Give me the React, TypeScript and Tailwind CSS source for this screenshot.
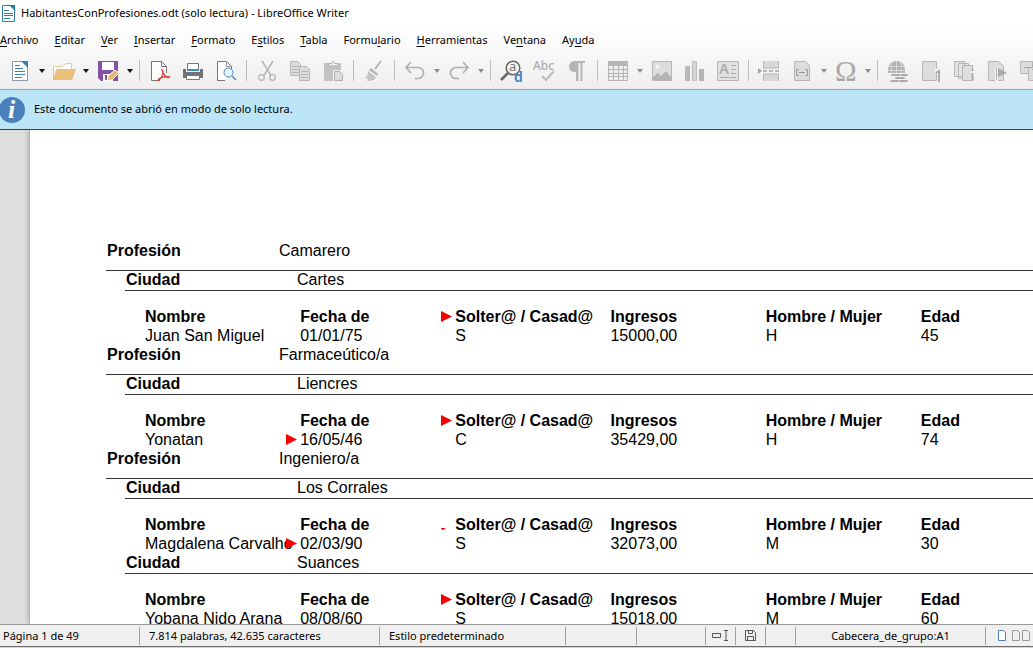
import React from 'react';

type Person = {
  nombre: string;
  fecha: string;
  estado: string;
  ingresos: string;
  sexo: string;
  edad: string;
  headMark?: 'full' | 'cut';
  dateMark?: boolean;
};

type Group = { profesion?: string; ciudad: string; person: Person };

const groups: Group[] = [
  {
    profesion: 'Camarero',
    ciudad: 'Cartes',
    person: { nombre: 'Juan San Miguel', fecha: '01/01/75', estado: 'S', ingresos: '15000,00', sexo: 'H', edad: '45', headMark: 'full' },
  },
  {
    profesion: 'Farmaceútico/a',
    ciudad: 'Liencres',
    person: { nombre: 'Yonatan', fecha: '16/05/46', estado: 'C', ingresos: '35429,00', sexo: 'H', edad: '74', headMark: 'full', dateMark: true },
  },
  {
    profesion: 'Ingeniero/a',
    ciudad: 'Los Corrales',
    person: { nombre: 'Magdalena Carvalho', fecha: '02/03/90', estado: 'S', ingresos: '32073,00', sexo: 'M', edad: '30', headMark: 'cut', dateMark: true },
  },
  {
    ciudad: 'Suances',
    person: { nombre: 'Yobana Nido Arana', fecha: '08/08/60', estado: 'S', ingresos: '15018,00', sexo: 'M', edad: '60', headMark: 'full' },
  },
];

// [before, access key, after]
const menus = [
  ['', 'A', 'rchivo'],
  ['', 'E', 'ditar'],
  ['', 'V', 'er'],
  ['', 'I', 'nsertar'],
  ['', 'F', 'ormato'],
  ['E', 's', 'tilos'],
  ['', 'T', 'abla'],
  ['Formu', 'l', 'ario'],
  ['', 'H', 'erramientas'],
  ['Ve', 'n', 'tana'],
  ['Ay', 'u', 'da'],
];

const Svg: React.FC<{ children: React.ReactNode }> = ({ children }) => (
  <svg width="22" height="22" viewBox="0 0 22 22" fill="none" className="shrink-0 overflow-visible" aria-hidden="true">
    {children}
  </svg>
);

const icons: Record<string, React.ReactNode> = {
  Nuevo: (
    <Svg>
      <path d="M3.500 1.500h10l5 5v14h-15z" fill="#fff" stroke="#8a9aa8" />
      <path d="M12 1h7v7z" fill="#2f7fb8" />
      <path d="M6 5.500h5M6 8.500h8M6 11.500h10M6 14.500h10M6 17.500h7" stroke="#3f7fbf" />
    </Svg>
  ),
  Abrir: (
    <Svg>
      <path d="M.5 19V6.500h9l3-3h6V9" fill="#fff" stroke="#e3c9a0" />
      <path d="M3 9h20l-4 11H0z" fill="#eac07a" />
    </Svg>
  ),
  Guardar: (
    <Svg>
      <path d="M1 1h20v20H4l-3-3z" fill="#8551a6" />
      <path d="M5 2h12v8H5z" fill="#fff" />
      <path d="M6 14h10v7H6z" fill="#fff" />
      <path d="M8 15h2v5H8z" fill="#8551a6" />
      <path d="M10 21l1-5 7-6 4 3-7 7z" fill="#eac07a" stroke="#fff" />
      <path d="M13 17l6-5" stroke="#d9a254" />
    </Svg>
  ),
  'Exportar a PDF': (
    <Svg>
      <path d="M11 20.500H2.500v-19h10l5 5V13" fill="#fff" stroke="#777" />
      <path d="M12.500 1.500v5h5" stroke="#777" />
      <path d="M13 10c2 1 1 7-3.500 10.500-1.500-2 5-4.500 11-3.500-1 2-6-1-7.500-7z" stroke="#d9483b" strokeWidth="1.400" />
    </Svg>
  ),
  Imprimir: (
    <Svg>
      <path d="M5.500 9V3.500h11V9" fill="#fff" stroke="#777" />
      <path d="M1 9h3v3h14V9h3v9H1z" fill="#6f7377" />
      <path d="M5 9h12v2H5z" fill="#3f8ac4" />
      <path d="M4.500 15.500h13v4h-13z" fill="#fff" stroke="#777" />
    </Svg>
  ),
  'Vista previa': (
    <Svg>
      <path d="M10 20.500H2.500v-19h9l5 5V9" fill="#fff" stroke="#777" />
      <path d="M11.500 1.500v5h5" stroke="#999" />
      <circle cx="13.500" cy="12.500" r="4.500" fill="#eaf4fb" stroke="#4f86ba" />
      <path d="M17 16l4 4" stroke="#4f86ba" strokeWidth="1.500" />
    </Svg>
  ),
  Cortar: (
    <Svg>
      <path d="M6 1l9 14.500M17 1L8 15.500" stroke="#b5b5b5" strokeWidth="1.500" />
      <circle cx="5.500" cy="17.500" r="2.800" stroke="#b5b5b5" strokeWidth="1.300" />
      <circle cx="16.500" cy="17.500" r="2.800" stroke="#b5b5b5" strokeWidth="1.300" />
    </Svg>
  ),
  Copiar: (
    <Svg>
      <path d="M1.500 1.500h7l3 3v11h-10z" fill="#ddd" stroke="#b5b5b5" />
      <path d="M3 6.500h7M3 9.500h7M3 12.500h7" stroke="#b5b5b5" />
      <path d="M10.500 6.500h7l3 3v11h-10z" fill="#ddd" stroke="#b5b5b5" />
      <path d="M12 11.500h7M12 14.500h7M12 17.500h7" stroke="#b5b5b5" />
    </Svg>
  ),
  Pegar: (
    <Svg>
      <path d="M2 3h17v18H2z" fill="#c2c2c2" />
      <path d="M6.500 6V3.500h3l1-2h1l1 2h3V6z" fill="#eee" stroke="#b5b5b5" />
      <path d="M11 10h7l4 4v8H11z" fill="#f0f0f0" />
      <path d="M12.500 11.500h5l3 3v6h-8z" fill="#ddd" stroke="#b0b0b0" />
    </Svg>
  ),
  'Clonar formato': (
    <Svg>
      <path d="M18 1l-6 8" stroke="#b5b5b5" strokeWidth="2" />
      <path d="M8 8l7 6-1 2-8-6z" fill="#b5b5b5" />
      <path d="M5 11l8 6c-1 3-4 4-9 4l1-2-3-1c2-1 3-4 3-7z" fill="#c4c4c4" />
    </Svg>
  ),
  Deshacer: (
    <Svg>
      <path d="M7 2L2 7.500 7 13M2.500 7.500H14a5.500 5.500 0 0 1 0 11h-3" stroke="#b0b0b0" strokeWidth="1.700" />
    </Svg>
  ),
  Rehacer: (
    <Svg>
      <path d="M15 2l5 5.500-5 5.500M19.500 7.500H8a5.500 5.500 0 0 0 0 11h3" stroke="#b0b0b0" strokeWidth="1.700" />
    </Svg>
  ),
  'Buscar y reemplazar': (
    <Svg>
      <circle cx="13" cy="8" r="6.800" stroke="#666" strokeWidth="1.500" />
      <path d="M8 13l-7 7" stroke="#666" strokeWidth="2.500" />
      <text x="9" y="11" fontFamily="Noto Sans, sans-serif" fontSize="13" fill="#777">a</text>
      <text x="14" y="22" fontFamily="Noto Sans, sans-serif" fontSize="14" fontWeight="600" fill="#3b7ec2">d</text>
    </Svg>
  ),
  Ortografía: (
    <Svg>
      <text x="0" y="10" fontFamily="Noto Sans, sans-serif" fontSize="12" fontWeight="500" fill="#acacac">Abc</text>
      <path d="M9 16l4 4 8-9" stroke="#bdbdbd" strokeWidth="2" />
    </Svg>
  ),
  'Marcas de formato': (
    <Svg>
      <path d="M10 12H8.500a5.500 5.500 0 0 1 0-11H19v2h-2.500v18h-2V3H12.500v18H10z" fill="#b5b5b5" />
    </Svg>
  ),
  Tabla: (
    <Svg>
      <path d="M1 1h20v20H1z" fill="#b5b5b5" />
      <path d="M2 6h4v3H2zM7 6h4v3H7zM12 6h4v3h-4zM17 6h3v3h-3zM2 10h4v3H2zM7 10h4v3H7zM12 10h4v3h-4zM17 10h3v3h-3zM2 14h4v2H2zM7 14h4v2H7zM12 14h4v2h-4zM17 14h3v2h-3zM2 17h4v3H2zM7 17h4v3H7zM12 17h4v3h-4zM17 17h3v3h-3z" fill="#ededed" />
    </Svg>
  ),
  Imagen: (
    <Svg>
      <path d="M1.500 1.500h19v19h-19z" fill="#ddd" stroke="#b5b5b5" />
      <circle cx="6.500" cy="6.500" r="2" fill="#f3f3f3" />
      <path d="M2 17l5-4 3 3 5-5 5 6v3.500H2z" fill="#b5b5b5" />
    </Svg>
  ),
  Gráfico: (
    <Svg>
      <path d="M1 6h5v15H1z" fill="#b8b8b8" />
      <path d="M8.500 1.500h4v19h-4z" fill="#d5d5d5" stroke="#bdbdbd" />
      <path d="M15 9h5v12h-5z" fill="#b5b5b5" />
    </Svg>
  ),
  'Cuadro de texto': (
    <Svg>
      <path d="M.5 1.500h21v19H.5z" fill="#e2e2e2" stroke="#b5b5b5" />
      <text x="2" y="14" fontFamily="Noto Sans, sans-serif" fontSize="15" fontWeight="600" fill="#adadad">A</text>
      <path d="M14 5.500h5M14 9.500h5M14 13.500h5M3 17.500h16" stroke="#adadad" />
    </Svg>
  ),
  'Salto de página': (
    <Svg>
      <path d="M5.500 1v7h15V1M5.500 21v-7h15v7" fill="#d8d8d8" stroke="#b5b5b5" />
      <path d="M5 11h17" stroke="#a5a5a5" strokeWidth="1.500" strokeDasharray="4 2" />
      <path d="M0 8l4 3-4 3z" fill="#a5a5a5" />
    </Svg>
  ),
  Campo: (
    <Svg>
      <path d="M3.500 1.500h11l4 4v15h-15z" fill="#ddd" stroke="#b5b5b5" />
      <path d="M8 9.500H5.500v6H8M14 9.500h2.500v6H14M8 12.500h6" stroke="#999" />
    </Svg>
  ),
  'Carácter especial': (
    <Svg>
      <text x="0" y="21" fontFamily="Liberation Serif, serif" fontSize="29" fill="#a9a9a9">Ω</text>
    </Svg>
  ),
  Hiperenlace: (
    <Svg>
      <path d="M1 13V9.500a8.500 8.500 0 0 1 17 0V13z" fill="#b2b2b2" />
      <path d="M2 6.500h15M1 10.500h17M9.500 1v12M6 2C4 5 4 9 5 13M13 2c2 3 2 7 1 11" stroke="#e0e0e0" strokeWidth=".8" />
      <path d="M5 15h7M14 15h6M4 21h7M13 21h7M9 18h8" stroke="#ababab" strokeWidth="1.800" strokeLinecap="round" />
    </Svg>
  ),
  'Nota al pie': (
    <Svg>
      <path d="M2.500 1.500h14v19h-14z" fill="#ddd" stroke="#b5b5b5" />
      <path d="M15 9h6v13h-3v-8h-3z" fill="#f2f2f2" />
      <path d="M16 13l3-2v11" stroke="#a5a5a5" strokeWidth="1.800" />
    </Svg>
  ),
  'Nota final': (
    <Svg>
      <path d="M1.500 1.500h10v15h-10zM5.500 3.500h10v15h-10z" fill="#e3e3e3" stroke="#b5b5b5" />
      <path d="M9.500 5.500h10v15h-10z" fill="#ddd" stroke="#b5b5b5" />
      <path d="M18 9h3v13h-3z" fill="#f2f2f2" />
      <path d="M19.500 9v2M19.500 13v8" stroke="#a5a5a5" strokeWidth="2" />
    </Svg>
  ),
  Marcador: (
    <Svg>
      <path d="M2.500 1.500h10l5 5v14h-15z" fill="#ddd" stroke="#b5b5b5" />
      <path d="M9 8v13h3V8z" fill="#f5f5f5" />
      <path d="M10.500 8v12" stroke="#b0b0b0" />
      <path d="M12 8l9 5-9 4z" fill="#a9a9a9" />
    </Svg>
  ),
  'Referencia cruzada': (
    <Svg>
      <path d="M1.500 1.500h12v12h-12z" fill="#ddd" stroke="#b5b5b5" />
      <path d="M9.500 7.500h12v13h-12z" fill="#ddd" stroke="#b5b5b5" />
      <path d="M5 7.500h8M13 5l3 2.500-3 2.500" stroke="#a5a5a5" />
    </Svg>
  ),
};

// '|' is a separator, 'v' a drop-down arrow, 'V' a dark one
const toolbar = [
  'Nuevo', 'V', 'Abrir', 'V', 'Guardar', 'V', '|',
  'Exportar a PDF', 'Imprimir', 'Vista previa', '|',
  'Cortar', 'Copiar', 'Pegar', '|', 'Clonar formato', '|',
  'Deshacer', 'v', 'Rehacer', 'v', '|',
  'Buscar y reemplazar', 'Ortografía', 'Marcas de formato', '|',
  'Tabla', 'v', 'Imagen', 'Gráfico', 'Cuadro de texto', '|',
  'Salto de página', 'Campo', 'v', 'Carácter especial', 'v', '|',
  'Hiperenlace', 'Nota al pie', 'Nota final', 'Marcador', 'Referencia cruzada',
];

const ToolbarItem: React.FC<{ name: string }> = ({ name }) => {
  if (name === '|') {
    return <span className="mr-[3px] ml-1 h-[21px] w-px shrink-0 bg-[#bcbcbc]" />;
  }
  if (name === 'v' || name === 'V') {
    return (
      <button aria-label="Más opciones" className="flex h-8 w-[11px] shrink-0 items-center justify-center">
        <svg width="6" height="4" viewBox="0 0 6 4" aria-hidden="true">
          <path d="M0 0h6L3 4z" fill={name === 'V' ? '#111' : '#8c8c8c'} />
        </svg>
      </button>
    );
  }
  return (
    <button aria-label={name} className="flex h-8 w-[33px] shrink-0 items-center justify-center">
      {icons[name]}
    </button>
  );
};

// red marker of a cell whose text does not fit
const Mark: React.FC<{ cut?: boolean }> = ({ cut }) => (
  <svg width="11" height="11" viewBox="0 0 11 11" className="absolute top-1 -left-[14px]" aria-hidden="true">
    <path d={cut ? 'M0 9h5L2 11H1z' : 'M0 0l11 5.500L0 11z'} fill="#f80000" />
  </svg>
);

const PersonTable: React.FC<{ person: Person }> = ({ person }) => (
  <table className="mt-4 ml-[39px] w-[931px] table-fixed text-left whitespace-nowrap">
    <thead>
      <tr className="font-bold">
        <th>Nombre</th>
        <th>Fecha de</th>
        <th className="relative">
          {person.headMark && <Mark cut={person.headMark === 'cut'} />}
          Solter@ / Casad@
        </th>
        <th>Ingresos</th>
        <th>Hombre / Mujer</th>
        <th>Edad</th>
      </tr>
    </thead>
    <tbody>
      <tr>
        <td>{person.nombre}</td>
        <td className="relative">
          {person.dateMark && <Mark />}
          {person.fecha}
        </td>
        <td>{person.estado}</td>
        <td>{person.ingresos}</td>
        <td>{person.sexo}</td>
        <td>{person.edad}</td>
      </tr>
    </tbody>
  </table>
);

const Divider = () => <span className="h-[18px] w-px shrink-0 bg-[#a0a0a0]" />;

const App: React.FC = () => (
  <div className="flex h-screen flex-col overflow-hidden bg-[#d4d4d4] font-['Noto_Sans',sans-serif] text-[11px] text-black">
    {/* Title bar */}
    <header className="flex h-[26px] shrink-0 items-center gap-[5px] bg-white pl-px">
      <svg width="15" height="17" viewBox="0 0 15 17" aria-hidden="true">
        <path d="M1.500.5h8l4 4v12h-12z" fill="#fff" stroke="#2b7fa8" />
        <path d="M8 0h6v6z" fill="#1b7fae" />
        <path d="M3 5.500h5M3 8.500h9M3 10.500h9M3 13.500h6" stroke="#2b7fa8" />
      </svg>
      <h1>HabitantesConProfesiones.odt (solo lectura) - LibreOffice Writer</h1>
    </header>

    <div className="shrink-0 border-b border-[#93a9b5] bg-linear-to-b from-white to-[#eeeeee]">
      <nav className="flex h-7 items-center gap-4">
        {menus.map(([before, key, after]) => (
          <button key={before + key + after}>
            {before}
            <span className="underline underline-offset-2">{key}</span>
            {after}
          </button>
        ))}
      </nav>
      <div className="flex h-[35px] items-center overflow-hidden pb-[2px] pl-[3px]">
        {toolbar.map((name, index) => (
          <ToolbarItem key={index} name={name} />
        ))}
      </div>
    </div>

    {/* Read-only notice */}
    <div className="flex h-10 shrink-0 items-center gap-[9px] border-b border-[#1b4a66] bg-[#bde5f8]">
      <svg width="25" height="26" viewBox="0 0 25 26" aria-hidden="true">
        <circle cx="12" cy="13" r="13" fill="#4a80bc" />
        <text x="8" y="21" fontFamily="Liberation Serif, serif" fontSize="26" fontStyle="italic" fontWeight="700" fill="#fff">i</text>
      </svg>
      <p>Este documento se abrió en modo de solo lectura.</p>
    </div>

    {/* Document */}
    <main className="min-h-0 flex-1 overflow-hidden bg-[#dfdfdf] pl-[29px]">
      <article className="h-full border-l border-[#b4b4b4] bg-white pt-[111px] pl-[76px] font-['Liberation_Sans',Arial,sans-serif] text-base leading-[19px] shadow-[0_0_6px_#a0a0a0]">
        {groups.map((group) => (
          <section key={group.ciudad}>
            {group.profesion && (
              <div className="-mb-px flex h-[30px] border-b border-[#333] pl-px">
                <strong className="w-[172px]">Profesión</strong>
                <span>{group.profesion}</span>
              </div>
            )}
            <div className="ml-[19px] flex h-[21px] border-b border-[#333] pl-px">
              <strong className="w-[171px]">Ciudad</strong>
              <span>{group.ciudad}</span>
            </div>
            <PersonTable person={group.person} />
          </section>
        ))}
      </article>
    </main>

    {/* Status bar */}
    <footer className="mb-px flex h-[23px] shrink-0 items-center border-t border-b border-t-[#9a9a9a] border-b-[#6e6e6e] bg-[#f0f0f0]">
      <span className="w-[139px] shrink-0 pt-px pl-[3px]">Página 1 de 49</span>
      <Divider />
      <span className="w-[239px] shrink-0 pt-px pl-[9px]">7.814 palabras, 42.635 caracteres</span>
      <Divider />
      <span className="w-[185px] shrink-0 pt-px pl-[9px]">Estilo predeterminado</span>
      <Divider />
      <span className="w-[70px] shrink-0" />
      <Divider />
      <span className="w-[68px] shrink-0" />
      <Divider />
      <span className="flex w-[29px] shrink-0 justify-center">
        <svg width="17" height="11" viewBox="0 0 17 11" fill="none" stroke="#555" aria-hidden="true">
          <path d="M.5 3.500h8v4h-8zM12 .5h4M12 10.500h4M14 .5v10" />
        </svg>
      </span>
      <Divider />
      <span className="flex w-[29px] shrink-0 justify-center">
        <svg width="11" height="11" viewBox="0 0 11 11" fill="none" stroke="#555" aria-hidden="true">
          <path d="M.5.5h8l2 2v8H.5zM3.500.5v3h4v-3M2.500 10.500v-4h6v4" />
        </svg>
      </span>
      <Divider />
      <span className="w-[29px] shrink-0" />
      <Divider />
      <span className="flex-1 pt-px text-center">Cabecera_de_grupo:A1</span>
      <Divider />
      <span className="flex w-[47px] shrink-0 items-center pl-3">
        <svg width="33" height="11" viewBox="0 0 33 11" fill="none" aria-hidden="true">
          <path d="M.5.5h5l2 2v8h-7z" fill="#fff" stroke="#4a80bc" />
          <path d="M14.500.5h5l2 2v8h-7zM24.500.5h5l2 2v8h-7z" stroke="#999" />
        </svg>
      </span>
    </footer>
  </div>
);

export default App;
